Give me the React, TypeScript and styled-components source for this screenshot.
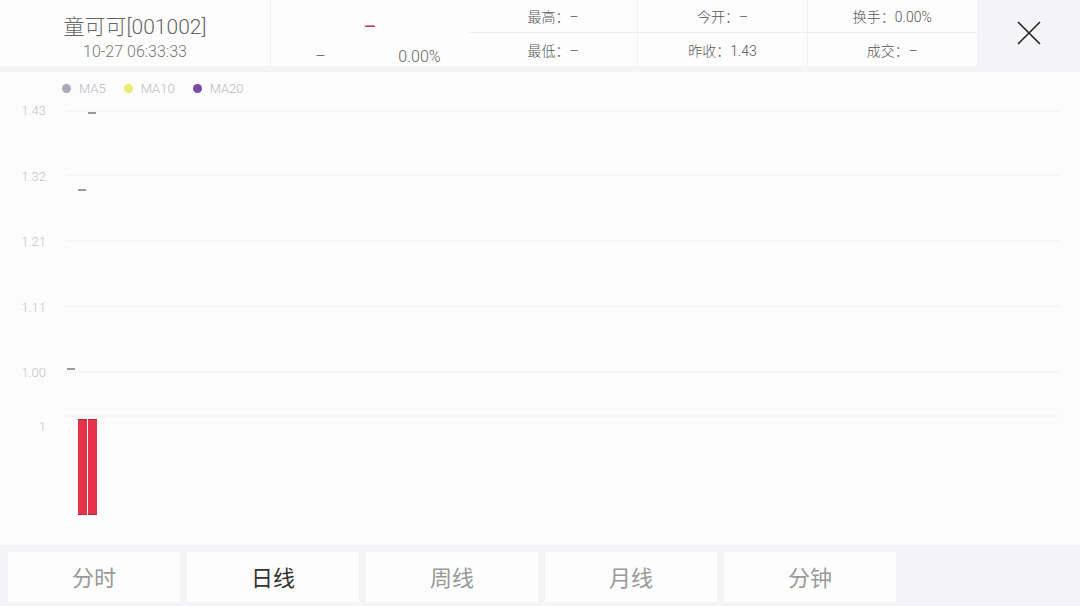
import React from 'react';
import styled, {createGlobalStyle} from 'styled-components';

const GlobalStyle = createGlobalStyle`
  html, body {
    margin: 0;
    padding: 0;
    background: #f4f4f6;
  }
  body {
    font-family: "Roboto", "Noto Sans CJK SC", sans-serif;
  }
`;

const Root = styled.div`
  width: 1080px;
  height: 606px;
  display: flex;
  flex-direction: column;
  background: #f4f4f6;
  overflow: hidden;
`;

const Header = styled.div`
  height: 66px;
  display: flex;
  background: #fdfdfd;
`;

const TitleBlock = styled.div`
  width: 271px;
  display: flex;
  flex-direction: column;
  align-items: center;
  padding-top: 14px;
  gap: 2px;
  box-sizing: border-box;
  border-right: 1px solid #f1f1f3;
`;

const StockName = styled.div`
  font-size: 21px;
  line-height: 26px;
  color: #666;
  font-weight: 300;
`;

const StockTime = styled.div`
  font-size: 16px;
  line-height: 20px;
  color: #777;
  font-weight: 300;
`;

const PriceBlock = styled.div`
  width: 198px;
  display: grid;
  grid-template-columns: 1fr 1fr;
  grid-template-rows: 44px 22px;
`;

const PriceMain = styled.div`
  grid-column: 1 / 3;
  display: flex;
  align-items: flex-end;
  justify-content: center;
  padding-bottom: 7px;
  font-size: 20px;
  line-height: 20px;
  color: #b8354a;
`;

const PriceSub = styled.div`
  display: flex;
  align-items: flex-end;
  justify-content: center;
  font-size: 16px;
  line-height: 18px;
  color: #666;
  font-weight: 300;
`;

const StatsGrid = styled.div`
  width: 508px;
  display: grid;
  grid-template-columns: repeat(3, 1fr);
  grid-template-rows: 33px 33px;
`;

const StatCell = styled.div<{$last?: boolean; $top?: boolean}>`
  display: flex;
  align-items: center;
  justify-content: center;
  font-size: 14px;
  color: #555;
  font-weight: 300;
  border-right: ${({$last}) => ($last ? 'none' : '1px solid #f2f2f4')};
  border-bottom: ${({$top}) => ($top ? '1px solid #efeff1' : 'none')};
`;

const CloseButton = styled.div`
  flex: 1;
  display: flex;
  align-items: center;
  justify-content: center;
  background: #f4f4f6;
`;

const ChartPanel = styled.div`
  margin-top: 6px;
  height: 473px;
  background: #fdfcfd;
  display: flex;
  flex-direction: column;
`;

const Legend = styled.div`
  height: 32px;
  display: flex;
  align-items: center;
  padding-left: 62px;
  gap: 18px;
`;

const LegendItem = styled.div`
  display: flex;
  align-items: center;
  gap: 8px;
  font-size: 13px;
  color: #b9b9c2;
  font-weight: 300;
`;

const Dot = styled.span<{$color: string}>`
  width: 9px;
  height: 9px;
  border-radius: 50%;
  background: ${({$color}) => $color};
`;

const Plot = styled.svg`
  display: block;
  width: 1080px;
  height: 441px;
  font-family: "Roboto", sans-serif;
`;

const TabBar = styled.div`
  margin-top: 7px;
  display: grid;
  grid-template-columns: repeat(5, 172px);
  gap: 7px;
  padding: 0 8px;
  height: 50px;
`;

const Tab = styled.div<{$active?: boolean}>`
  display: flex;
  align-items: center;
  justify-content: center;
  padding-bottom: 3px;
  box-sizing: border-box;
  background: #fdfdfd;
  font-size: 22px;
  color: ${({$active}) => ($active ? '#333' : '#999')};
`;

const stats = [
  ['最高：–', '今开：–', '换手：0.00%'],
  ['最低：–', '昨收：1.43', '成交：–'],
];

const gridLines = [
  {y: 7, label: '1.43', ly: 10.5},
  {y: 71, label: '1.32', ly: 76.5},
  {y: 137, label: '1.21', ly: 141.5},
  {y: 202, label: '1.11', ly: 207.5},
  {y: 268, label: '1.00', ly: 272.5},
  {y: 312, label: '1', ly: 326.5},
];

const ticks = [
  {x1: 88, x2: 96, y: 9},
  {x1: 78, x2: 86, y: 86},
  {x1: 67, x2: 75, y: 265},
];

const bars = [78, 88];

const tabs = ['分时', '日线', '周线', '月线', '分钟'];

export default function App() {
  return (
    <Root>
      <GlobalStyle />
      <Header>
        <TitleBlock>
          <StockName>童可可[001002]</StockName>
          <StockTime>10-27 06:33:33</StockTime>
        </TitleBlock>
        <PriceBlock>
          <PriceMain>–</PriceMain>
          <PriceSub>–</PriceSub>
          <PriceSub>0.00%</PriceSub>
        </PriceBlock>
        <StatsGrid>
          {stats.map((row, r) =>
            row.map((text, c) => (
              <StatCell key={`${r}-${c}`} $top={r === 0} $last={c === 2}>
                {text}
              </StatCell>
            ))
          )}
        </StatsGrid>
        <CloseButton>
          <svg width="24" height="24" viewBox="0 0 24 24">
            <path d="M1 1 L23 23 M23 1 L1 23" stroke="#222" strokeWidth="1.6" fill="none" />
          </svg>
        </CloseButton>
      </Header>
      <ChartPanel>
        <Legend>
          <LegendItem><Dot $color="#a9a9b9" />MA5</LegendItem>
          <LegendItem><Dot $color="#e9ec6c" />MA10</LegendItem>
          <LegendItem><Dot $color="#7d49a6" />MA20</LegendItem>
        </Legend>
        <Plot viewBox="0 0 1080 441">
          {gridLines.map((g) => (
            <g key={g.label}>
              <line x1="66" x2="1060" y1={g.y} y2={g.y} stroke="#efeff2" strokeWidth="1" />
              <text x="46" y={g.ly} textAnchor="end" fontSize="13" fill="#c2c2c8" fontWeight="300">
                {g.label}
              </text>
            </g>
          ))}
          {ticks.map((t) => (
            <line key={t.y} x1={t.x1} x2={t.x2} y1={t.y} y2={t.y} stroke="#666" strokeWidth="1.3" />
          ))}
          {bars.map((x) => (
            <g key={x}>
              <rect x={x} y="315" width="9" height="96" fill="#e6334c" />
              <line x1={x} x2={x + 9} y1="315.5" y2="315.5" stroke="#a52b3d" strokeWidth="1" />
              <line x1={x} x2={x + 9} y1="410.5" y2="410.5" stroke="#a52b3d" strokeWidth="1" />
            </g>
          ))}
        </Plot>
      </ChartPanel>
      <TabBar>
        {tabs.map((t) => (
          <Tab key={t} $active={t === '日线'}>{t}</Tab>
        ))}
      </TabBar>
    </Root>
  );
}
